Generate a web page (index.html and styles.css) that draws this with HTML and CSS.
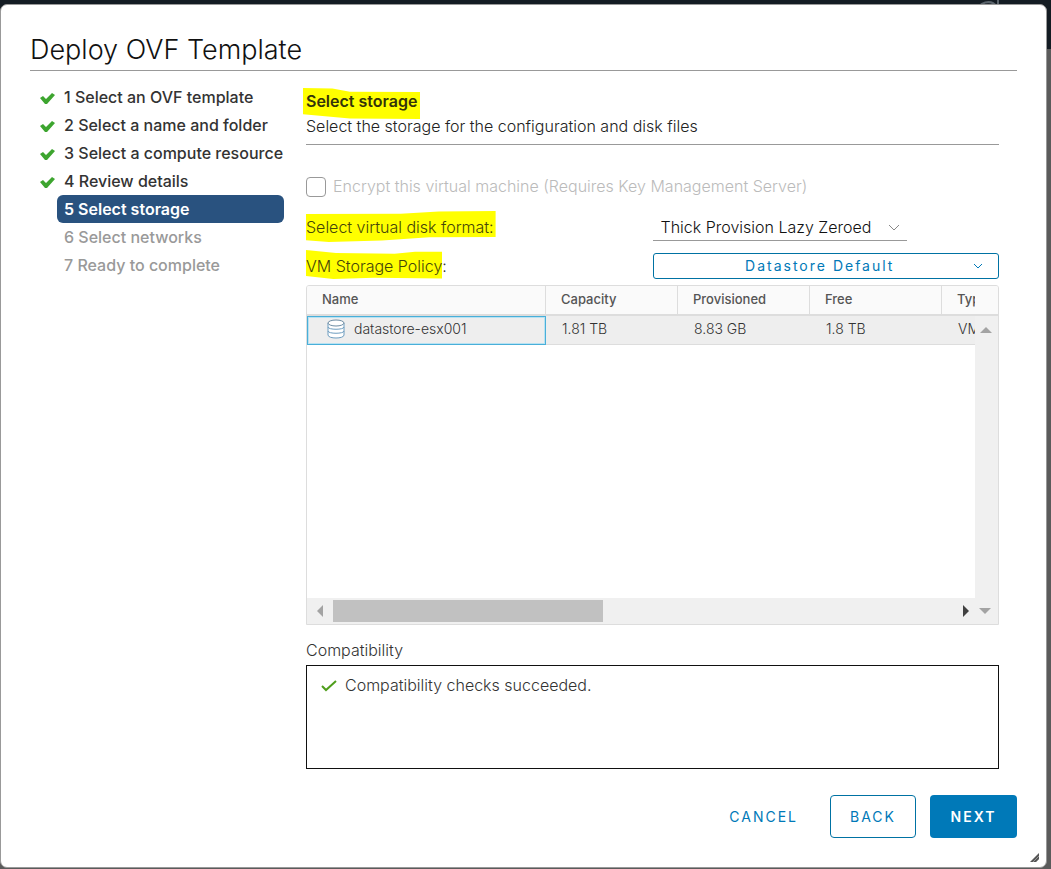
FILE: index.html
```html
<!DOCTYPE html>
<html lang="en">
<head>
<meta charset="utf-8">
<title>Deploy OVF Template</title>
<link rel="stylesheet" href="styles.css">
</head>
<body>
<svg class="backdrop-logo" viewBox="0 0 24 24" aria-hidden="true"><path d="M1 12a11 11 0 0 1 20-5M22 0v9" fill="none" stroke="#5b646c" stroke-width="2"/></svg>
<div class="dialog" role="dialog" aria-labelledby="dialog-title">
  <header class="dialog-header"><h1 id="dialog-title">Deploy OVF Template</h1></header>
  <div class="wizard">
    <nav class="steps" aria-label="Steps">
      <ol>
        <li class="step"><svg class="tick" viewBox="0 0 16 14"><path d="M0 7l3-2 3 3 6-6 3 2-8 9H5z"/></svg><span>1 Select an OVF template</span></li>
        <li class="step"><svg class="tick" viewBox="0 0 16 14"><path d="M0 7l3-2 3 3 6-6 3 2-8 9H5z"/></svg><span>2 Select a name and folder</span></li>
        <li class="step"><svg class="tick" viewBox="0 0 16 14"><path d="M0 7l3-2 3 3 6-6 3 2-8 9H5z"/></svg><span>3 Select a compute resource</span></li>
        <li class="step"><svg class="tick" viewBox="0 0 16 14"><path d="M0 7l3-2 3 3 6-6 3 2-8 9H5z"/></svg><span>4 Review details</span></li>
        <li class="step active" aria-current="step"><span>5 Select storage</span></li>
        <li class="step pending"><span>6 Select networks</span></li>
        <li class="step pending"><span>7 Ready to complete</span></li>
      </ol>
    </nav>
    <main class="page">
      <div class="page-header">
        <h2><span class="mark mark-title">Select storage</span></h2>
        <p>Select the storage for the configuration and disk files</p>
      </div>
      <div class="encrypt">
        <input type="checkbox" id="encrypt" disabled>
        <label for="encrypt">Encrypt this virtual machine (Requires Key Management Server)</label>
      </div>
      <div class="field">
        <label for="format"><span class="mark mark-format">Select virtual disk format:</span></label>
        <div class="select-box">
          <select id="format"><option>Thick Provision Lazy Zeroed</option></select>
          <svg class="chevron" viewBox="0 0 12 8"><path d="M1 1l5 5 5-5"/></svg>
        </div>
      </div>
      <div class="field">
        <label for="policy"><span class="mark mark-policy">VM Storage Policy</span>:</label>
        <button type="button" class="policy" id="policy"><span>Datastore Default</span><svg viewBox="0 0 12 8"><path d="M2 2l4 4 4-4"/></svg></button>
      </div>
      <div class="grid">
        <div class="grid-view">
          <table>
            <colgroup><col class="col-name"><col class="col"><col class="col"><col class="col"><col class="col"></colgroup>
            <thead><tr><th>Name</th><th>Capacity</th><th>Provisioned</th><th>Free</th><th>Type</th></tr></thead>
            <tbody><tr>
              <td class="focused"><div class="store"><svg viewBox="0 0 18 20"><path d="M1 4v12c0 4 16 4 16 0V4" fill="#fff"/><path d="M1 4v12c0 4 16 4 16 0V4M1 8c0 3 16 3 16 0M1 12c0 3 16 3 16 0" fill="none" stroke="#6d9cbf"/><ellipse cx="9" cy="4" rx="8" ry="3" fill="#fff" stroke="#6d8ca3"/></svg>datastore-esx001</div></td>
              <td>1.81 TB</td><td>8.83 GB</td><td>1.8 TB</td><td>VMFS 6</td>
            </tr></tbody>
          </table>
        </div>
        <div class="grid-side"><div class="corner"></div><div class="vbar"><svg viewBox="0 0 12 6"><path d="M0 6l6-6 6 6z" fill="#a3a3a3"/></svg></div></div>
        <div class="hbar">
          <svg class="arrow" viewBox="0 0 6 12"><path d="M6 0v12L0 6z" fill="#a3a3a3"/></svg>
          <div class="track"><div class="thumb"></div></div>
          <svg class="arrow" viewBox="0 0 6 12"><path d="M0 0v12l6-6z" fill="#404040"/></svg>
          <svg class="down" viewBox="0 0 12 6"><path d="M0 0h12L6 6z" fill="#a3a3a3"/></svg>
        </div>
      </div>
      <h3>Compatibility</h3>
      <div class="compat"><svg viewBox="0 0 16 12"><path d="M1 6l4 4L15 1"/></svg><span>Compatibility checks succeeded.</span></div>
    </main>
  </div>
  <footer class="actions">
    <button type="button" class="btn link">CANCEL</button>
    <button type="button" class="btn outline">BACK</button>
    <button type="button" class="btn primary">NEXT</button>
  </footer>
  <svg class="resizer" viewBox="0 0 10 10"><path d="M0 9L9 0v6L6 9z" fill="#555"/><path d="M3 9l6-6M6 9l3-3" stroke="#999"/></svg>
</div>
</body>
</html>
```
FILE: styles.css
```css
* { box-sizing: border-box; }
body {
  margin: 0;
  min-height: 100vh;
  padding: 4px 4px 1px 0;
  display: flex;
  font: 300 16px/24px Inter, "Open Sans", sans-serif;
  color: #333;
  background: linear-gradient(#141c23 49px, #5b5b5b 49px);
}
button, select { font: inherit; margin: 0; }
h1, h2, h3, p, ol { margin: 0; padding: 0; font-weight: 300; }
.backdrop-logo { position: absolute; top: 0; right: 51px; width: 24px; height: 24px; }
.dialog {
  position: relative;
  flex: 1;
  display: flex;
  flex-direction: column;
  padding: 25px 29px 29px;
  background: #fff;
  border: 1px solid #999;
  border-radius: 7px;
}
.dialog-header { border-bottom: 1px solid #999; }
h1 { font-size: 27px; line-height: 40px; color: #111; }
.wizard { display: flex; gap: 22px; padding-right: 18px; flex: 1; }
.steps { flex: 0 0 254px; padding-top: 12px; }
ol { list-style: none; }
.step {
  display: flex;
  align-items: center;
  height: 28px;
  margin-left: 27px;
  padding-left: 7px;
  border-radius: 6px;
  font-weight: 500;
  white-space: nowrap;
}
.tick { width: 16px; height: 14px; margin: 2px 8px 0 -24px; fill: #3da52f; }
.active { background: #29527f; color: #fff; font-weight: 600; }
.pending { color: #999; }
.page { flex: 1; min-width: 0; display: flex; flex-direction: column; }
.page-header { padding-top: 18px; border-bottom: 1px solid #999; height: 74px; }
h2 { font-size: 16px; line-height: 25px; font-weight: 600; }
.page-header p { line-height: 25px; color: #222; }
.mark { position: relative; isolation: isolate; color: #45450a; }
.mark::before { content: ""; position: absolute; z-index: -1; background: #ff0; }
.mark-title { color: #33330a; }
.mark-title::before { inset: -3px -3px -8px; clip-path: polygon(0 0, 25% 2%, 40% 12%, 100% 13%, 100% 100%, 40% 98%, 0 85%); }
.mark-format::before { inset: -6px -2px -5px 0; clip-path: polygon(0 10%, 50% 9%, 70% 2%, 100% 0, 100% 84%, 65% 85%, 40% 95%, 12% 100%, 0 94%); }
.mark-policy::before { inset: -6px 0 -3px; clip-path: polygon(0 0, 22% 10%, 65% 13%, 80% 6%, 100% 6%, 100% 98%, 50% 96%, 20% 100%, 0 90%); }
.encrypt { display: flex; align-items: center; gap: 7px; height: 24px; margin-top: 29px; color: #bbb; white-space: nowrap; }
.encrypt input { appearance: none; width: 20px; height: 20px; margin: 1px 0 0; border: 1px solid #999; border-radius: 4px; background: #fff; }
.field { display: grid; grid-template-columns: 1fr 1fr; align-items: center; min-height: 26px; margin-top: 12px; }
.encrypt + .field { margin-top: 15px; }
.select-box { position: relative; width: 254px; }
.select-box select { appearance: none; width: 100%; height: 28px; padding: 0 28px 0 8px; border: 0; border-bottom: 1px solid #999; border-radius: 0; background: transparent; color: #111; }
.chevron { position: absolute; right: 7px; top: 11px; width: 12px; height: 8px; fill: none; stroke: #888; }
.policy { display: flex; align-items: center; height: 26px; padding: 0 14px; border: 1px solid #0072a3; border-radius: 3px; background: #fff; color: #0079b8; font-size: 14px; font-weight: 400; letter-spacing: 2px; }
.policy span { flex: 1; }
.policy svg { width: 12px; height: 8px; fill: none; stroke: #0079b8; }
.grid { display: grid; grid-template: 1fr 26px / 1fr 23px; height: 340px; margin-top: 6px; border: 1px solid #ddd; border-radius: 3px 3px 0 0; overflow: hidden; font-size: 14px; }
.grid-view { overflow: hidden; min-width: 0; }
table { table-layout: fixed; width: 767px; border-collapse: separate; border-spacing: 0; }
.col-name { width: 239px; }
.col { width: 132px; }
th { height: 30px; padding: 0 0 2px 15px; text-align: left; font-size: 13px; font-weight: 500; line-height: 20px; color: #555; background: #fafafa; border-right: 1px solid #ddd; border-bottom: 2px solid #ddd; }
td { height: 29px; padding: 0 0 2px 16px; line-height: 20px; background: #eee; border-bottom: 1px solid #ddd; }
.focused { padding: 0 0 4px 19px; border: 1px solid #49afd9; outline: 1px solid #b9e2f2; outline-offset: -2px; }
.store { display: flex; align-items: center; gap: 9px; }
.store svg { width: 18px; height: 20px; }
.grid-side { display: flex; flex-direction: column; }
.corner { height: 30px; background: #fafafa; border-bottom: 2px solid #ddd; }
.vbar { flex: 1; padding: 11px 0 0 5px; background: #f0f0f0; }
.vbar svg { display: block; width: 12px; height: 6px; }
.hbar { grid-column: 1 / -1; display: flex; align-items: center; padding: 0 7px 0 10px; background: #f0f0f0; }
.arrow { width: 6px; height: 12px; }
.track { flex: 1; margin: 0 3px 0 10px; height: 22px; }
.thumb { width: 43%; height: 100%; background: #c1c1c1; }
.down { width: 12px; height: 6px; margin-left: 10px; }
h3 { font-size: 16px; line-height: 24px; margin: 13px 0 3px; }
.compat { display: flex; align-items: flex-start; gap: 8px; height: 104px; padding: 7px 14px; border: 1px solid #111; }
.compat svg { width: 16px; height: 12px; margin-top: 7px; fill: none; stroke: #4f9e1c; stroke-width: 2; }
.actions { display: flex; justify-content: flex-end; gap: 14px; }
.btn { height: 43px; min-width: 86px; padding: 0 18px; border: 1px solid transparent; border-radius: 4px; background: #fff; color: #0079b8; font-size: 14px; font-weight: 400; letter-spacing: 2px; }
.link { padding: 0 17px; }
.outline { border-color: #0072a3; }
.primary { min-width: 87px; background: #0079b8; color: #fff; font-weight: 600; }
.resizer { position: absolute; right: 6px; bottom: 4px; width: 10px; height: 10px; }
```
